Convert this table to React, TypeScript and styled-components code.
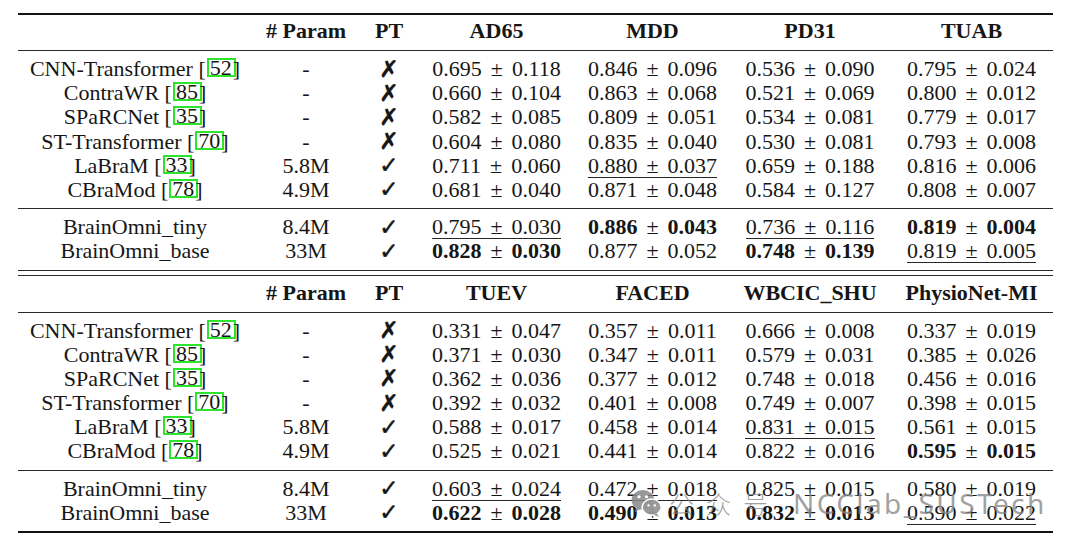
import React from "react";
import styled, { createGlobalStyle } from "styled-components";

const GlobalStyle = createGlobalStyle`
  html, body { margin: 0; padding: 0; background: #ffffff; }
  body { font-family: "Liberation Serif", "Times New Roman", serif; color: #161616; }
`;

const COLS = "234px 108px 58px 157px 155px 160px 163px";

const Page = styled.div`
  position: relative;
  width: 1080px;
  height: 549px;
  padding: 13px 0 0 18px;
  box-sizing: border-box;
  overflow: hidden;
`;

const Table = styled.div`
  width: 1035px;
  display: flex;
  flex-direction: column;
  font-size: 22px;
`;

const Rule = styled.div<{ $w: number }>`
  height: ${(p) => p.$w}px;
  background: ${(p) => (p.$w > 1 ? "#141414" : "#2a2a2a")};
`;

const RuleGap = styled.div`
  height: 4px;
`;

const HeaderRow = styled.div<{ $h: number; $lift: number }>`
  display: grid;
  grid-template-columns: ${COLS};
  height: ${(p) => p.$h}px;
  padding-bottom: ${(p) => p.$lift}px;
  box-sizing: border-box;
  align-items: center;
  font-weight: bold;
  line-height: 24px;
`;

const Section = styled.div`
  padding: 5.5px 0 6.5px;
  display: flex;
  flex-direction: column;
`;

const Row = styled.div`
  display: grid;
  grid-template-columns: ${COLS};
  height: 24.2px;
  line-height: 24.2px;
  align-items: center;
`;

const Cell = styled.div`
  text-align: center;
  white-space: nowrap;
`;

const Value = styled.span<{ $ul?: boolean }>`
  background: ${(p) =>
    p.$ul ? "linear-gradient(#262626, #262626) left bottom / 100% 1px no-repeat" : "none"};
`;

const Num = styled.span<{ $bold?: boolean }>`
  font-weight: ${(p) => (p.$bold ? "bold" : "normal")};
`;

const Pm = styled.span`
  padding: 0 0.41em;
`;

const Mark = styled.span`
  font-family: "DejaVu Sans", sans-serif;
  font-size: 23px;
  -webkit-text-stroke: 0.5px #161616;
`;

const Cite = styled.span`
  display: inline-block;
  line-height: 15px;
  height: 15px;
  padding: 0 2px 0 1px;
  margin-left: 1px;
  border: 2px solid #2be42b;
  vertical-align: 1px;
`;

const CloseBracket = styled.span`
  margin-left: -3px;
`;

const Watermark = styled.div`
  position: absolute;
  left: 631px;
  top: 484px;
  display: flex;
  align-items: center;
  gap: 7px;
  pointer-events: none;
  color: rgba(135, 135, 135, 0.78);
`;

const WmCjk = styled.span`
  font-family: "Noto Sans CJK SC", "Noto Sans", sans-serif;
  font-size: 25px;
  letter-spacing: 12px;
  font-weight: 300;
`;

const WmLatin = styled.span`
  font-family: "Noto Sans", "DejaVu Sans", sans-serif;
  font-size: 28px;
  letter-spacing: 2.4px;
  font-weight: 400;
  margin-left: 6px;
`;

type V = { a: string; b: string; bold?: boolean; ul?: boolean };
type R = { name: string; cite?: string; param: string; pt: boolean; vals: V[] };

const v = (s: string, flag?: "b" | "u"): V => {
  const [a, b] = s.split("/");
  return { a, b, bold: flag === "b", ul: flag === "u" };
};

const groupA: R[][] = [
  [
    { name: "CNN-Transformer", cite: "52", param: "-", pt: false, vals: [v("0.695/0.118"), v("0.846/0.096"), v("0.536/0.090"), v("0.795/0.024")] },
    { name: "ContraWR", cite: "85", param: "-", pt: false, vals: [v("0.660/0.104"), v("0.863/0.068"), v("0.521/0.069"), v("0.800/0.012")] },
    { name: "SPaRCNet", cite: "35", param: "-", pt: false, vals: [v("0.582/0.085"), v("0.809/0.051"), v("0.534/0.081"), v("0.779/0.017")] },
    { name: "ST-Transformer", cite: "70", param: "-", pt: false, vals: [v("0.604/0.080"), v("0.835/0.040"), v("0.530/0.081"), v("0.793/0.008")] },
    { name: "LaBraM", cite: "33", param: "5.8M", pt: true, vals: [v("0.711/0.060"), v("0.880/0.037", "u"), v("0.659/0.188"), v("0.816/0.006")] },
    { name: "CBraMod", cite: "78", param: "4.9M", pt: true, vals: [v("0.681/0.040"), v("0.871/0.048"), v("0.584/0.127"), v("0.808/0.007")] },
  ],
  [
    { name: "BrainOmni_tiny", param: "8.4M", pt: true, vals: [v("0.795/0.030", "u"), v("0.886/0.043", "b"), v("0.736/0.116", "u"), v("0.819/0.004", "b")] },
    { name: "BrainOmni_base", param: "33M", pt: true, vals: [v("0.828/0.030", "b"), v("0.877/0.052"), v("0.748/0.139", "b"), v("0.819/0.005", "u")] },
  ],
];

const groupB: R[][] = [
  [
    { name: "CNN-Transformer", cite: "52", param: "-", pt: false, vals: [v("0.331/0.047"), v("0.357/0.011"), v("0.666/0.008"), v("0.337/0.019")] },
    { name: "ContraWR", cite: "85", param: "-", pt: false, vals: [v("0.371/0.030"), v("0.347/0.011"), v("0.579/0.031"), v("0.385/0.026")] },
    { name: "SPaRCNet", cite: "35", param: "-", pt: false, vals: [v("0.362/0.036"), v("0.377/0.012"), v("0.748/0.018"), v("0.456/0.016")] },
    { name: "ST-Transformer", cite: "70", param: "-", pt: false, vals: [v("0.392/0.032"), v("0.401/0.008"), v("0.749/0.007"), v("0.398/0.015")] },
    { name: "LaBraM", cite: "33", param: "5.8M", pt: true, vals: [v("0.588/0.017"), v("0.458/0.014"), v("0.831/0.015", "u"), v("0.561/0.015")] },
    { name: "CBraMod", cite: "78", param: "4.9M", pt: true, vals: [v("0.525/0.021"), v("0.441/0.014"), v("0.822/0.016"), v("0.595/0.015", "b")] },
  ],
  [
    { name: "BrainOmni_tiny", param: "8.4M", pt: true, vals: [v("0.603/0.024", "u"), v("0.472/0.018", "u"), v("0.825/0.015"), v("0.580/0.019")] },
    { name: "BrainOmni_base", param: "33M", pt: true, vals: [v("0.622/0.028", "b"), v("0.490/0.013", "b"), v("0.832/0.013", "b"), v("0.590/0.022", "u")] },
  ],
];

const ValueCell = ({ val }: { val: V }) => (
  <Cell>
    <Value $ul={val.ul}>
      <Num $bold={val.bold}>{val.a}</Num>
      <Pm>±</Pm>
      <Num $bold={val.bold}>{val.b}</Num>
    </Value>
  </Cell>
);

const DataRow = ({ r }: { r: R }) => (
  <Row>
    <Cell>
      {r.name}
      {r.cite && (
        <>
          {" ["}
          <Cite>{r.cite}</Cite>
          <CloseBracket>]</CloseBracket>
        </>
      )}
    </Cell>
    <Cell>{r.param}</Cell>
    <Cell>
      <Mark>{r.pt ? "✓" : "✗"}</Mark>
    </Cell>
    {r.vals.map((val, i) => (
      <ValueCell key={i} val={val} />
    ))}
  </Row>
);

const Header = ({ h, lift, titles }: { h: number; lift: number; titles: string[] }) => (
  <HeaderRow $h={h} $lift={lift}>
    <Cell />
    <Cell># Param</Cell>
    <Cell>PT</Cell>
    {titles.map((t) => (
      <Cell key={t}>{t}</Cell>
    ))}
  </HeaderRow>
);

const Group = ({ sections }: { sections: R[][] }) => (
  <>
    {sections.map((rows, si) => (
      <React.Fragment key={si}>
        {si > 0 && <Rule $w={1} />}
        <Section>
          {rows.map((r) => (
            <DataRow key={r.name} r={r} />
          ))}
        </Section>
      </React.Fragment>
    ))}
  </>
);

const WeChatIcon = () => (
  <svg width="31" height="30" viewBox="0 0 30 28">
    <ellipse cx="11.5" cy="11" rx="11" ry="9.5" fill="rgba(135,135,135,0.85)" />
    <path d="M5 18.5 L3.5 23 L9 19.8 Z" fill="rgba(135,135,135,0.85)" />
    <circle cx="7.8" cy="8" r="1.5" fill="#fff" />
    <circle cx="15" cy="8" r="1.5" fill="#fff" />
    <ellipse cx="20" cy="18" rx="9.2" ry="7.8" fill="rgba(150,150,150,0.95)" stroke="#fff" strokeWidth="1.4" />
    <path d="M25 24 L27 27.5 L22 25.3 Z" fill="rgba(150,150,150,0.95)" />
    <circle cx="17" cy="16.3" r="1.2" fill="#fff" />
    <circle cx="23" cy="16.3" r="1.2" fill="#fff" />
  </svg>
);

export default function App() {
  return (
    <>
      <GlobalStyle />
      <Page>
        <Table>
          <Rule $w={2} />
          <Header h={35} lift={3} titles={["AD65", "MDD", "PD31", "TUAB"]} />
          <Rule $w={1} />
          <Group sections={groupA} />
          <Rule $w={1} />
          <RuleGap />
          <Rule $w={1} />
          <Header h={36} lift={2} titles={["TUEV", "FACED", "WBCIC_SHU", "PhysioNet-MI"]} />
          <Rule $w={1} />
          <Group sections={groupB} />
          <Rule $w={2} />
        </Table>
        <Watermark>
          <WeChatIcon />
          <WmCjk>公众号</WmCjk>
          <WmLatin>NCClab_SUSTech</WmLatin>
        </Watermark>
      </Page>
    </>
  );
}
